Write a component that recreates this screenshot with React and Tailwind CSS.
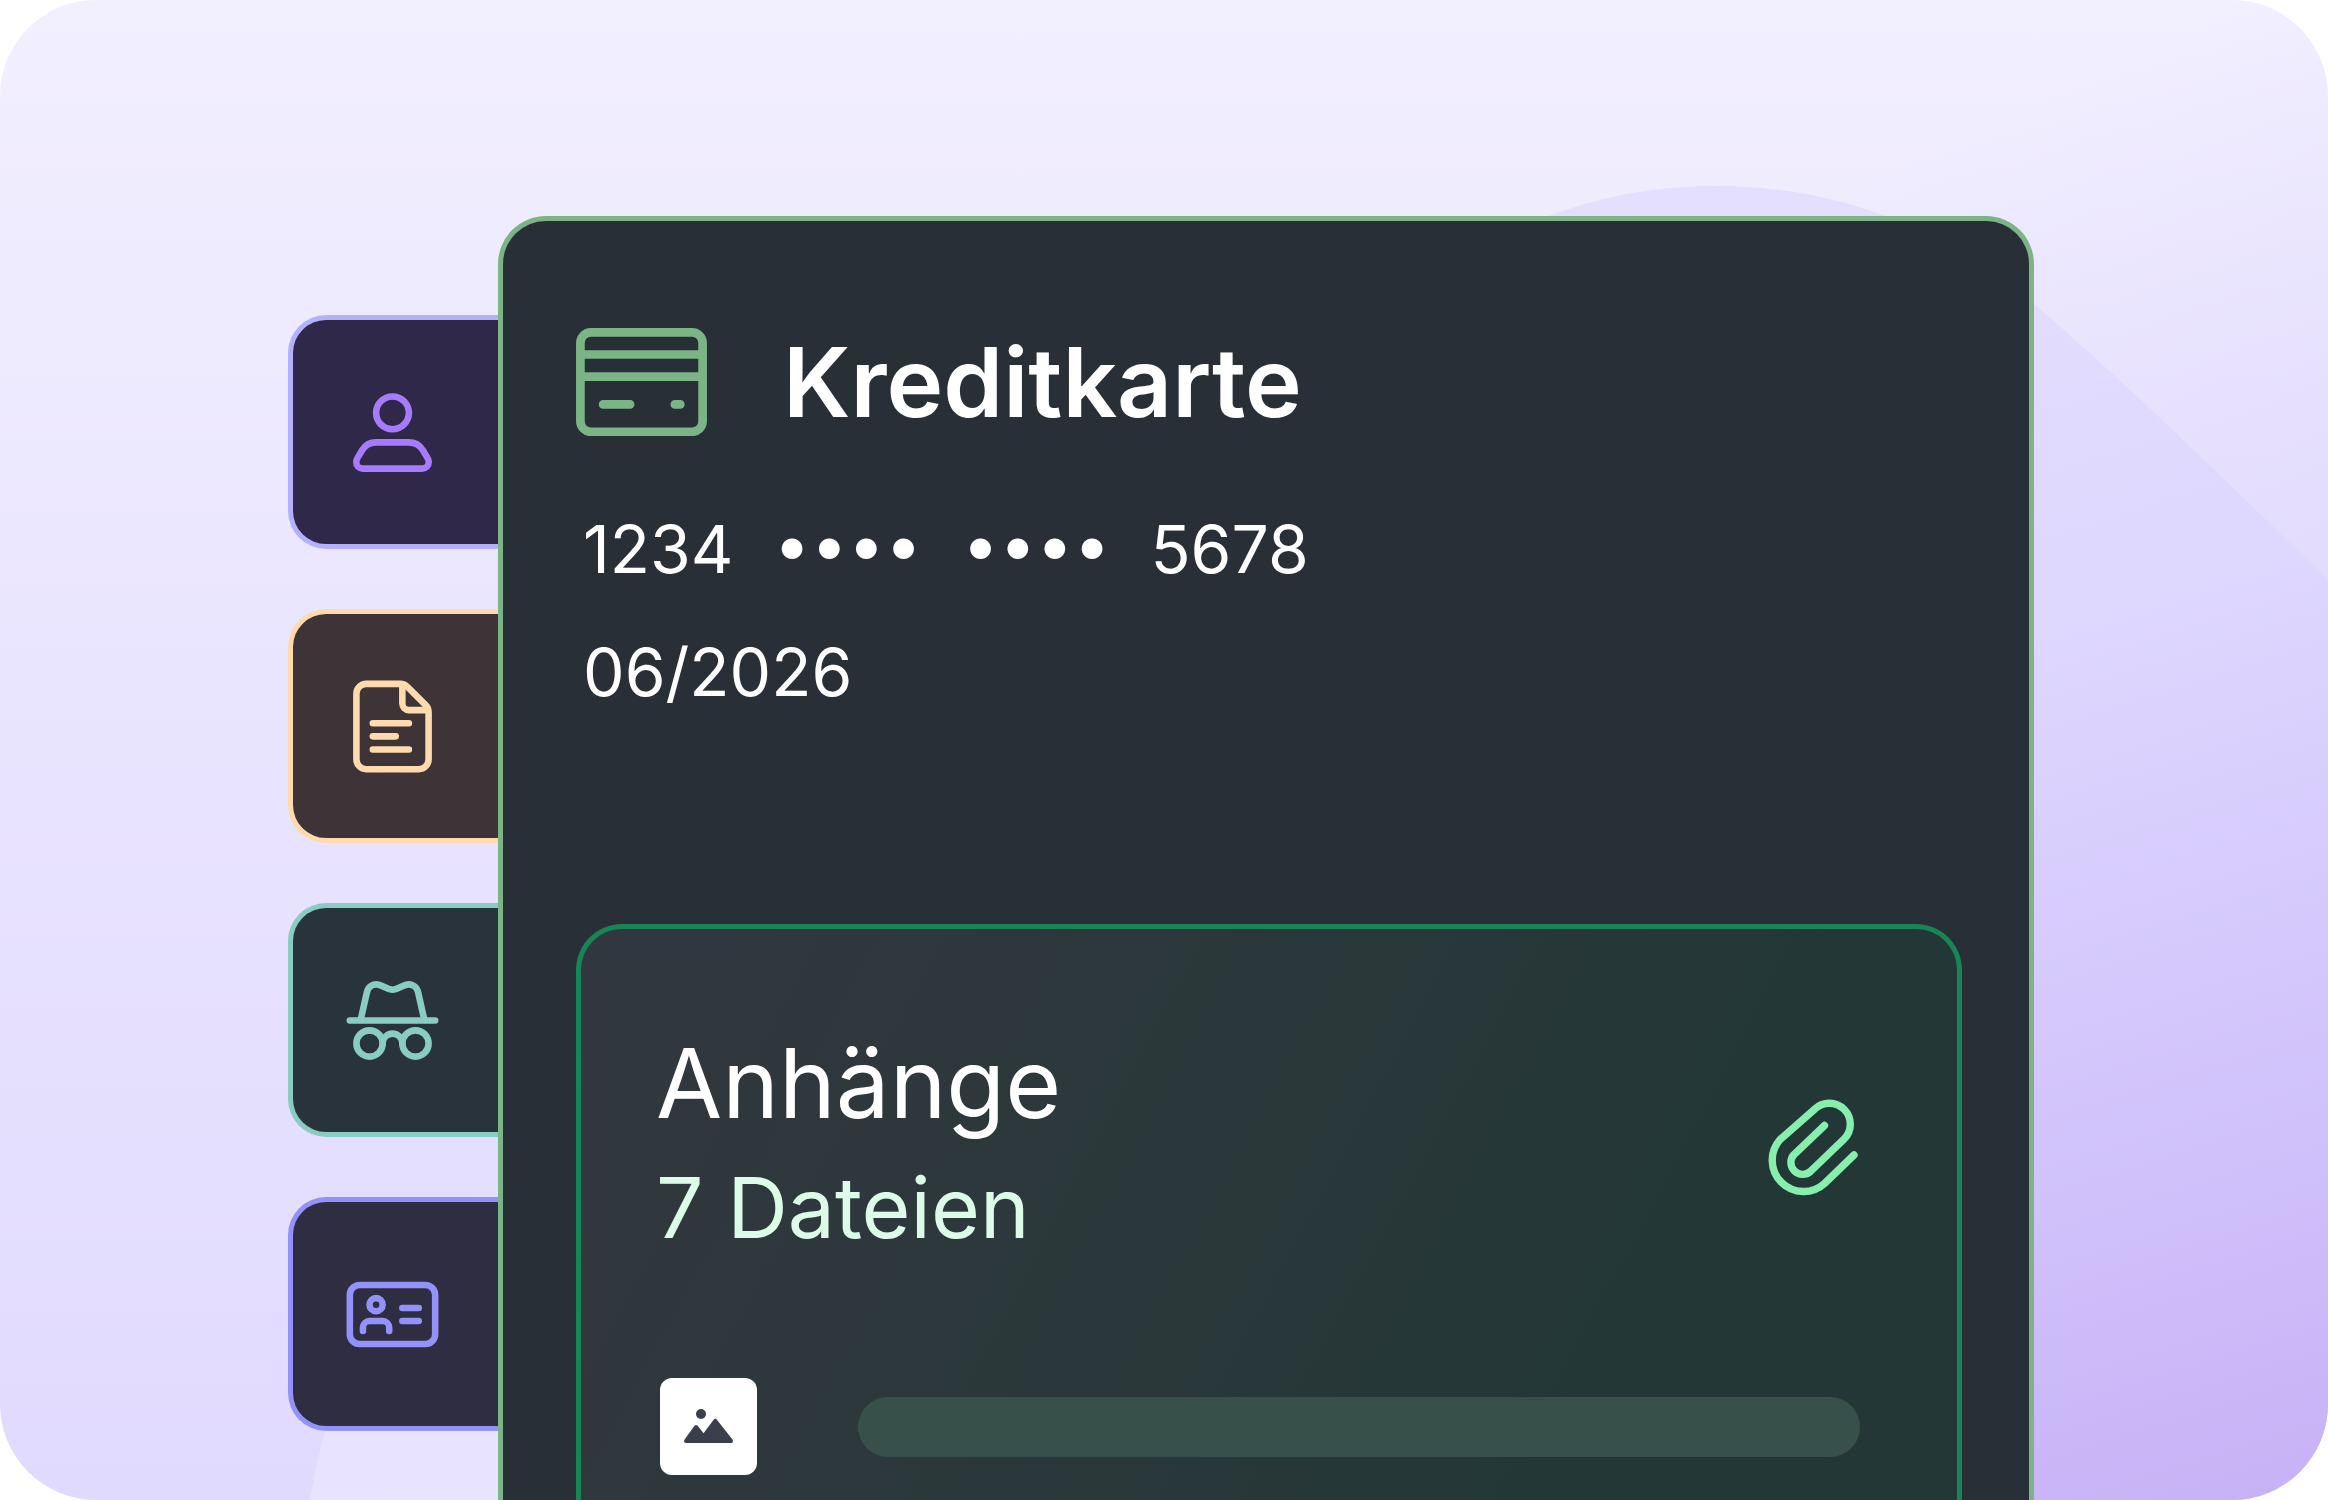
const PersonIcon = () => (
  <svg viewBox="0 0 16 16" className="size-[105px]" fill="none" stroke="currentColor" strokeLinecap="round" strokeLinejoin="round" aria-hidden="true">
    <circle cx="8" cy="5" r="2.5" />
    <path d="M5.5 9.5h5c.87 0 1.67.45 2.13 1.2l.72 1.2c.12.2.17.4.17.6 0 .55-.42 1-1 1H3.48c-.58 0-1-.45-1-1 0-.2.05-.4.17-.6l.72-1.2c.46-.75 1.26-1.2 2.13-1.2z" />
  </svg>
);

const NoteIcon = () => (
  <svg viewBox="0 0 16 16" className="size-[105px]" fill="none" stroke="currentColor" strokeLinecap="round" strokeLinejoin="round" aria-hidden="true">
    <path d="M4 1.5h5.2c.4 0 .78.16 1.06.44l2.8 2.8c.28.28.44.66.44 1.06V13a1.5 1.5 0 0 1-1.5 1.5H4A1.5 1.5 0 0 1 2.5 13V3A1.5 1.5 0 0 1 4 1.5z" />
    <path d="M9.5 1.7v2.8a1 1 0 0 0 1 1h2.8" />
    <path d="M5 7.5h5.5M5 9.5h3.5M5 11.5h5.5" />
  </svg>
);

const IncognitoIcon = () => (
  <svg viewBox="0 0 16 16" className="size-[105px]" fill="none" stroke="currentColor" strokeLinecap="round" strokeLinejoin="round" aria-hidden="true">
    <path d="M3.15 7.9l.95-4.2c.2-.9 1-1.35 1.8-1.15.75.2 1.35.75 2.1.75s1.35-.55 2.1-.75c.8-.2 1.6.25 1.8 1.15l.95 4.2" />
    <path d="M1.5 8h13" />
    <circle cx="4.5" cy="11.5" r="2" />
    <circle cx="11.5" cy="11.5" r="2" />
    <path d="M6.5 11.5a1.5 1.5 0 0 1 3 0" />
  </svg>
);

const IdCardIcon = () => (
  <svg viewBox="0 0 16 16" className="size-[105px]" fill="none" stroke="currentColor" strokeLinecap="round" strokeLinejoin="round" aria-hidden="true">
    <rect x="1.5" y="3.5" width="13" height="9" rx="1.5" />
    <circle cx="5.5" cy="6.5" r="1" />
    <path d="M3.5 10.5V10a1 1 0 0 1 1-1h2a1 1 0 0 1 1 1v.5" />
    <path d="M9.5 7H12M9.5 9H12" />
  </svg>
);

const CreditCardIcon = () => (
  <svg viewBox="0 0 131 108" className="h-[108px] w-[131px] shrink-0 text-[#7bb586]" fill="none" stroke="currentColor" strokeWidth="8.7" strokeLinecap="round" aria-hidden="true">
    <rect x="4.4" y="4.4" width="122.2" height="99.4" rx="10.5" />
    <path d="M5 26.5h121M5 48.6h121M27.1 76.4h27M98.8 76.4h5.5" />
  </svg>
);

const PaperclipIcon = () => (
  <svg viewBox="0 0 91 98" className="h-[98px] w-[93px]" preserveAspectRatio="xMinYMid" fill="none" stroke="currentColor" strokeWidth="7.4" strokeLinecap="round" aria-hidden="true">
    <path d="M87 56L57.5 84.5A31.3 31.3 0 0 1 13.2 40.4L47.6 10.2A21 21 0 0 1 77 40.2L43.5 72.4A11.8 11.8 0 0 1 26.8 55.8L57.5 26.5" />
  </svg>
);

const ImageIcon = () => (
  <svg viewBox="0 0 49 35" className="h-[35px] w-[49px]" fill="#3b3f4d" aria-hidden="true">
    <circle cx="17" cy="5" r="5" />
    <path d="M10.7 16.6c.8-.9 1.9-.9 2.7 0l6.2 7.6L29.8 10.6c.8-1 2.1-1 2.9 0L48.5 30.6c1 1.4.2 3.4-1.6 3.4H2.1C.3 34-.5 32 .6 30.6z" />
  </svg>
);

const Backdrop = () => (
  <svg viewBox="0 0 2328 1500" preserveAspectRatio="none" className="absolute inset-0 size-full" aria-hidden="true">
    <defs>
      <linearGradient id="base" x1="0" y1="0" x2="0" y2="1">
        <stop offset="0" stopColor="#f2efff" />
        <stop offset="0.5" stopColor="#e9e4fe" />
        <stop offset="1" stopColor="#e1daff" />
      </linearGradient>
      <linearGradient id="shade" gradientUnits="userSpaceOnUse" x1="2040" y1="100" x2="2280" y2="620">
        <stop offset="0" stopColor="#dcd3fd" stopOpacity="0" />
        <stop offset="1" stopColor="#dcd3fd" stopOpacity="0.6" />
      </linearGradient>
      <linearGradient id="glow" gradientUnits="userSpaceOnUse" x1="400" y1="1181" x2="440" y2="1500">
        <stop offset="0" stopColor="#e5dffe" />
        <stop offset="1" stopColor="#e9e4fe" />
      </linearGradient>
      <linearGradient id="wave" gradientUnits="userSpaceOnUse" x1="1850" y1="190" x2="2260" y2="1500">
        <stop offset="0" stopColor="#e4dfff" />
        <stop offset="0.35" stopColor="#ded7fe" />
        <stop offset="0.75" stopColor="#d0c1fb" />
        <stop offset="1" stopColor="#c8b2f6" />
      </linearGradient>
    </defs>
    <rect width="2328" height="1500" fill="url(#base)" />
    <rect x="1400" width="928" height="1500" fill="url(#shade)" />
    <path d="M310 1500C330 1370 395 1260 498 1181L900 1000V1500z" fill="url(#glow)" />
    <path d="M1400 300C1500 225 1600 186 1715 186C1850 186 1950 235 2034 304C2140 395 2240 495 2328 580V1500H1400z" fill="url(#wave)" />
  </svg>
);

const tabs = [
  { label: "Person", Icon: PersonIcon, style: "border-[#b3b1fe] bg-[#2f2848] text-[#a67bff]" },
  { label: "Notiz", Icon: NoteIcon, style: "border-[#ffdaad] bg-[#3e3437] text-[#ffdaad]" },
  { label: "Inkognito", Icon: IncognitoIcon, style: "border-[#89ccc3] bg-[#29333c] text-[#89ccc3]" },
  { label: "Ausweis", Icon: IdCardIcon, style: "border-[#9292fa] bg-[#2f2d42] text-[#9292fa]" },
];

const App = () => {
  return (
    <div className="relative flex min-h-screen overflow-hidden rounded-[96px] pt-[216px] pr-[294px] pl-72 font-['Inter',sans-serif] text-white">
      <Backdrop />

      <nav className="relative flex w-[210px] shrink-0 flex-col gap-15 pt-[99px]">
        {tabs.map(({ label, Icon, style }) => (
          <button key={label} aria-label={label} className={`flex h-[234px] items-center rounded-l-[38px] border-5 border-r-0 pl-[47px] ${style}`}>
            <Icon />
          </button>
        ))}
      </nav>

      <main className="relative flex min-w-0 flex-1 flex-col rounded-t-[48px] border-5 border-b-0 border-[#7bb586] bg-[#282f36] pt-[107px] pr-[67px] pl-[73px]">
        <header className="flex items-center gap-[76px]">
          <CreditCardIcon />
          <h1 className="text-8xl font-semibold">Kreditkarte</h1>
        </header>

        <div className="mt-[77px] flex flex-col gap-[51px] pl-[7px] text-[66px] leading-[72px]">
          <p className="flex gap-10 [font-feature-settings:'case']">
            <span>1234</span>
            <span>••••</span>
            <span>••••</span>
            <span>5678</span>
          </p>
          <p>06/2026</p>
        </div>

        <section className="mt-[216px] flex-1 rounded-t-[46px] border-5 border-b-0 border-[#188554] bg-[linear-gradient(118deg,#32373f_0%,#2c383b_35%,#243737_75%)] pt-[106px] pr-[97px] pl-[75px]">
          <div className="flex items-center justify-between">
            <div>
              <h2 className="text-8xl leading-[96px]">Anhänge</h2>
              <p className="mt-6 text-[84px] leading-[106px] text-[#dcfce7]">7 Dateien</p>
            </div>
            <button aria-label="Datei anhängen" className="text-[#86efac]">
              <PaperclipIcon />
            </button>
          </div>

          <div className="mt-[117px] flex items-center gap-[101px] pl-1">
            <div className="flex size-[97px] shrink-0 items-center justify-center rounded-xl bg-white">
              <ImageIcon />
            </div>
            <div className="h-15 flex-1 rounded-full bg-[#38504a]" />
          </div>
        </section>
      </main>
    </div>
  );
};

export default App;
